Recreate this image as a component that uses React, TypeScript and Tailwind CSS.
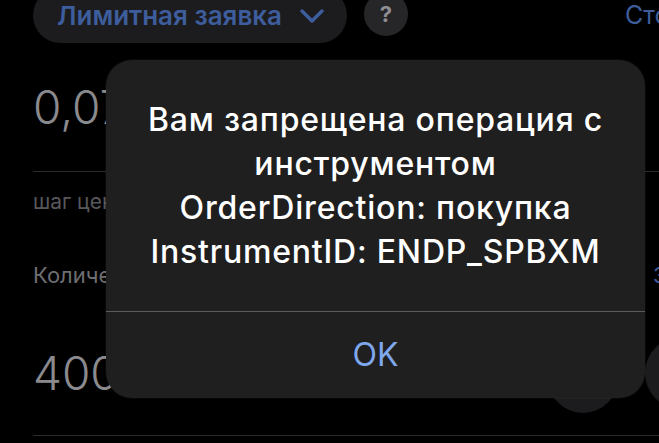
import React from "react";

// Order form (limit order) with a blocking alert on top
const App: React.FC = () => {
  return (
    <div className="relative h-[443px] w-[659px] overflow-hidden bg-black font-['Inter','Noto_Sans',sans-serif]">
      {/* Order type selector row */}
      <div className="-mt-[12px] flex h-[55px] items-center pl-[33px]">
        <div className="flex h-[55px] w-[314px] shrink-0 items-center justify-between rounded-full bg-[#1c1c1e] pl-6 pr-[22px]">
          <span className="text-[26px] font-semibold text-[#3d5d9c]">Лимитная заявка</span>
          <svg width="26" height="16" viewBox="0 0 26 16" fill="none" className="mt-[1px]">
            <path d="M3 3l10 10L23 3" stroke="#3d5d9c" strokeWidth="3.4" strokeLinecap="round" strokeLinejoin="round" />
          </svg>
        </div>
        <div className="-mt-[3px] ml-[17px] flex h-[44px] w-[44px] shrink-0 items-center justify-center rounded-full bg-[#262628] text-[22px] font-bold text-[#8e8e93]">
          ?
        </div>
        <span className="ml-[217px] shrink-0 whitespace-nowrap text-[25px] text-[#3d5d9c]">
          Стоп-заявка
        </span>
      </div>

      {/* Price */}
      <div className="ml-[33px] mt-[41px] border-b border-[#2a2a2c] pb-[41px]">
        <div className="text-[46px] font-light leading-[46px] text-[#8a8a8e]">0,0735</div>
      </div>
      <div className="ml-[33px] mt-[17px] text-[21px] leading-[26px] text-[#58585c]">шаг цены 0,0001</div>

      {/* Quantity */}
      <div className="ml-[33px] mt-[46px] flex items-center whitespace-nowrap">
        <span className="w-[620px] shrink-0 text-[22px] leading-[28px] text-[#6e6e72]">Количество, лоты</span>
        <span className="shrink-0 text-[22px] leading-[28px] text-[#3d5d9c]">Заполнить</span>
      </div>
      <div className="ml-[33px] mt-[44px] flex items-center border-b border-[#2a2a2c] pb-[22px]">
        <div className="w-[515px] shrink-0 text-[46px] font-light leading-[46px] text-[#8a8a8e]">400</div>
        <div className="mt-[10px] h-[70px] w-[70px] shrink-0 rounded-full bg-[#1c1c1e]" />
        <div className="ml-[27px] h-[72px] w-[72px] shrink-0 rounded-full bg-[#1c1c1e]" />
      </div>

      {/* Alert */}
      <div className="absolute left-[106px] top-[60px] flex h-[338px] w-[539px] flex-col rounded-[26px] bg-[#1f1f1f] shadow-[0_0_0_1px_rgba(255,255,255,0.03)]">
        <div className="flex flex-1 items-center justify-center text-center text-[32px] font-medium leading-[44px] tracking-[0.8px] text-white">
          <p>
            Вам запрещена операция с
            <br />
            инструментом
            <br />
            OrderDirection: покупка
            <br />
            InstrumentID: ENDP_SPBXM
          </p>
        </div>
        <div className="h-px bg-[#5a5a5c]" />
        <button className="flex h-[86px] items-center justify-center text-[32px] text-[#7ea7ec]">OK</button>
      </div>
    </div>
  );
};

export default App;
